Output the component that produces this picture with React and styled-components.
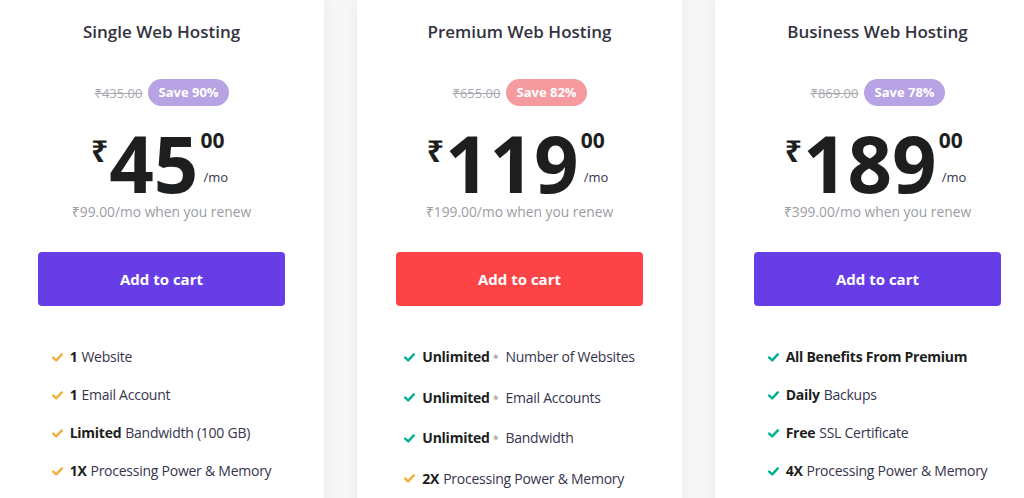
import React from "react";
import styled, { createGlobalStyle } from "styled-components";

const Global = createGlobalStyle`
  html, body { margin: 0; padding: 0; background: #f6f6f7; overflow: hidden; }
  body { font-family: "Open Sans", "Noto Sans", "DejaVu Sans", sans-serif; }
  * { box-sizing: border-box; }
`;

const Page = styled.div`
  display: flex;
  gap: 33px;
  margin-left: -1px;
  width: 1100px;
`;

const Card = styled.div`
  flex: 0 0 325px;
  height: 540px;
  background: #fff;
  box-shadow: 0 0 12px rgba(0, 0, 0, 0.05);
  display: flex;
  flex-direction: column;
  align-items: center;
  padding-top: 20px;
`;

const Title = styled.h2`
  margin: 0;
  font-size: 17px;
  line-height: 24px;
  font-weight: 600;
  color: #33323f;
`;

const SaveRow = styled.div`
  margin-top: 35px;
  height: 27px;
  display: flex;
  align-items: center;
  gap: 6px;
`;

const OldPrice = styled.span`
  font-size: 13px;
  color: #a8a8ae;
  text-decoration: line-through;
`;

const Badge = styled.span`
  height: 27px;
  line-height: 27px;
  padding: 0 10px;
  border-radius: 14px;
  background: ${(p) => p.$bg};
  color: #fff;
  font-size: 13px;
  font-weight: 700;
`;

const PriceRow = styled.div`
  margin-top: 22px;
  margin-right: 4px;
  display: flex;
  align-items: flex-start;
  color: #1d1e20;
`;

const Currency = styled.span`
  font-size: 30px;
  line-height: 30px;
  font-weight: 700;
  margin-top: 8px;
  margin-right: 1px;
`;

const Amount = styled.span`
  font-size: 78px;
  line-height: 70px;
  font-weight: 700;
`;

const SupCol = styled.div`
  display: flex;
  flex-direction: column;
  margin-left: 2px;
`;

const Cents = styled.span`
  font-size: 21px;
  line-height: 21px;
  font-weight: 700;
  margin-top: 2px;
`;

const Per = styled.span`
  font-size: 13px;
  line-height: 16px;
  margin: 18px 0 0 3px;
  color: #36344d;
`;

const Renew = styled.div`
  margin-top: 5px;
  font-size: 13.8px;
  line-height: 18px;
  color: #9c9ca3;
`;

const CartButton = styled.button`
  margin-top: 31px;
  width: 247px;
  height: 54px;
  border: none;
  border-radius: 4px;
  background: ${(p) => p.$bg};
  color: #fff;
  font-family: inherit;
  font-size: 15px;
  font-weight: 700;
`;

const Features = styled.ul`
  list-style: none;
  margin: 41px 0 0;
  padding: 0;
  display: flex;
  flex-direction: column;
  gap: ${(p) => p.$gap}px;
`;

const Feature = styled.li`
  display: flex;
  align-items: center;
  gap: 7px;
  font-size: 14px;
  line-height: 20px;
  letter-spacing: -0.25px;
  color: #36344d;
`;

const Strong = styled.b`
  font-weight: 700;
  color: #1d1e20;
  margin-right: 4px;
`;

const Star = styled.span`
  color: #8c8c94;
  font-size: 11px;
  line-height: 11px;
  margin: 0 7px 0 -1px;
`;

const Check = ({ color }) => (
  <svg width="11" height="9" viewBox="0 0 11 9" fill="none">
    <path d="M1.2 4.6 L4.2 7.4 L9.8 1.4" stroke={color} strokeWidth="2.4" strokeLinecap="round" strokeLinejoin="round" />
  </svg>
);

const GOLD = "#f0b03c";
const GREEN = "#00b090";

const plans = [
  {
    title: "Single Web Hosting",
    old: "₹435.00",
    save: "Save 90%",
    badge: "#b7a3e3",
    amount: "45",
    renew: "₹99.00/mo when you renew",
    btn: "#673de6",
    gap: 18,
    features: [
      { c: GOLD, b: "1", t: "Website" },
      { c: GOLD, b: "1", t: "Email Account" },
      { c: GOLD, b: "Limited", t: "Bandwidth (100 GB)" },
      { c: GOLD, b: "1X", t: "Processing Power & Memory" },
    ],
  },
  {
    title: "Premium Web Hosting",
    old: "₹655.00",
    save: "Save 82%",
    badge: "#f59a9e",
    amount: "119",
    renew: "₹199.00/mo when you renew",
    btn: "#fc4447",
    gap: 20.5,
    features: [
      { c: GREEN, b: "Unlimited", star: true, t: "Number of Websites" },
      { c: GREEN, b: "Unlimited", star: true, t: "Email Accounts" },
      { c: GREEN, b: "Unlimited", star: true, t: "Bandwidth" },
      { c: GOLD, b: "2X", t: "Processing Power & Memory" },
    ],
  },
  {
    title: "Business Web Hosting",
    old: "₹869.00",
    save: "Save 78%",
    badge: "#b7a3e3",
    amount: "189",
    renew: "₹399.00/mo when you renew",
    btn: "#673de6",
    gap: 18,
    features: [
      { c: GREEN, b: "All Benefits From Premium", t: "" },
      { c: GREEN, b: "Daily", t: "Backups" },
      { c: GREEN, b: "Free", t: "SSL Certificate" },
      { c: GREEN, b: "4X", t: "Processing Power & Memory" },
    ],
  },
];

export default function App() {
  return (
    <>
      <Global />
      <Page>
        {plans.map((p) => (
          <Card key={p.title}>
            <Title>{p.title}</Title>
            <SaveRow>
              <OldPrice>{p.old}</OldPrice>
              <Badge $bg={p.badge}>{p.save}</Badge>
            </SaveRow>
            <PriceRow>
              <Currency>₹</Currency>
              <Amount>{p.amount}</Amount>
              <SupCol>
                <Cents>00</Cents>
                <Per>/mo</Per>
              </SupCol>
            </PriceRow>
            <Renew>{p.renew}</Renew>
            <CartButton $bg={p.btn}>Add to cart</CartButton>
            <Features $gap={p.gap}>
              {p.features.map((f, i) => (
                <Feature key={i}>
                  <Check color={f.c} />
                  <span>
                    <Strong>{f.b}</Strong>
                    {f.star && <Star>*</Star>}
                    {f.t}
                  </span>
                </Feature>
              ))}
            </Features>
          </Card>
        ))}
      </Page>
    </>
  );
}
